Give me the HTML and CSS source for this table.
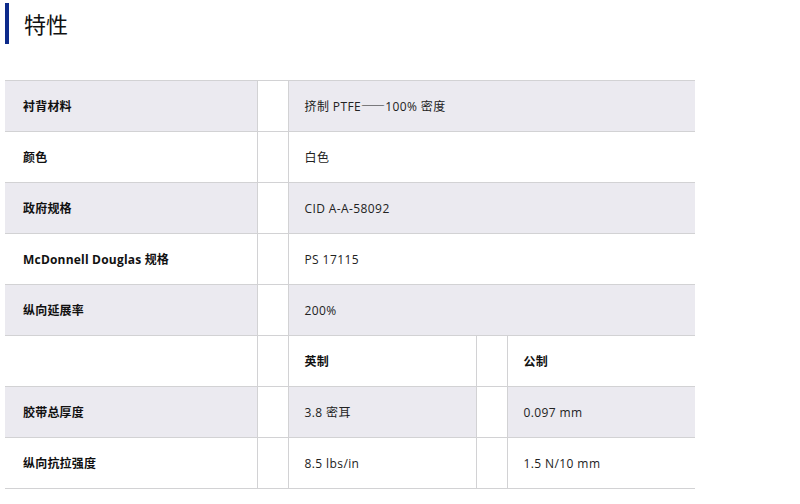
FILE: index.html
```html
<!DOCTYPE html>
<html lang="zh-CN">
<head>
<meta charset="utf-8">
<title>特性</title>
<link rel="stylesheet" href="styles.css">
</head>
<body>
<div class="page">
  <h2 class="section-title">特性</h2>
  <table class="spec-table">
    <colgroup>
      <col class="c-label">
      <col class="c-gap">
      <col class="c-val">
      <col class="c-gap">
      <col class="c-val">
    </colgroup>
    <tbody>
      <tr class="shade">
        <th>衬背材料</th><td class="gap"></td><td colspan="3">挤制 PTFE<span class="dash">——</span>100% 密度</td>
      </tr>
      <tr>
        <th>颜色</th><td class="gap"></td><td colspan="3">白色</td>
      </tr>
      <tr class="shade">
        <th>政府规格</th><td class="gap"></td><td colspan="3">CID A-A-58092</td>
      </tr>
      <tr>
        <th>McDonnell Douglas 规格</th><td class="gap"></td><td colspan="3">PS 17115</td>
      </tr>
      <tr class="shade">
        <th>纵向延展率</th><td class="gap"></td><td colspan="3">200%</td>
      </tr>
      <tr>
        <th></th><td class="gap"></td><td class="head">英制</td><td class="gap"></td><td class="head">公制</td>
      </tr>
      <tr class="shade">
        <th>胶带总厚度</th><td class="gap"></td><td>3.8 密耳</td><td class="gap"></td><td>0.097 mm</td>
      </tr>
      <tr>
        <th>纵向抗拉强度</th><td class="gap"></td><td>8.5 lbs/in</td><td class="gap"></td><td>1.5 N/10 mm</td>
      </tr>
    </tbody>
  </table>
</div>
</body>
</html>
```
FILE: styles.css
```css
html, body {
  margin: 0;
  padding: 0;
  background: #ffffff;
}
body {
  font-family: "Open Sans", "Noto Sans CJK SC", sans-serif;
  color: #222222;
}
.page {
  padding: 3px 5px 0 5px;
}
.section-title {
  margin: 0;
  height: 41px;
  border-left: 4px solid #0d2a8a;
  padding-left: 15px;
  font-family: "Noto Sans CJK SC", sans-serif;
  font-weight: 400;
  font-size: 22px;
  line-height: 41px;
  color: #111111;
}
.spec-table {
  margin-top: 36px;
  width: 690px;
  border-collapse: collapse;
  table-layout: fixed;
  font-size: 12px;
}
.c-label { width: 252px; }
.c-gap { width: 31px; }
.c-val { width: 188px; }
.spec-table tr {
  height: 51px;
}
.spec-table tr:first-child th,
.spec-table tr:first-child td {
  border-top: 1px solid #d2d2d4;
}
.spec-table th,
.spec-table td {
  border-bottom: 1px solid #d2d2d4;
  padding: 0 0 0 16px;
  text-align: left;
  vertical-align: middle;
  height: 50px;
  box-sizing: border-box;
  letter-spacing: 0.4px;
}
.spec-table th {
  padding-left: 18px;
  font-weight: 700;
  color: #111111;
  letter-spacing: 0.2px;
}
.spec-table td.gap {
  padding: 0;
  background: #ffffff;
  border-left: 1px solid #d2d2d4;
  border-right: 1px solid #d2d2d4;
}
.spec-table td.head {
  font-weight: 700;
  color: #111111;
  letter-spacing: 0.2px;
}
.dash {
  font-family: "Noto Sans CJK SC", sans-serif;
  letter-spacing: 0;
}
.spec-table tr.shade th,
.spec-table tr.shade td {
  background: #ebeaf0;
}
.spec-table tr.shade td.gap {
  background: #ffffff;
}
```
